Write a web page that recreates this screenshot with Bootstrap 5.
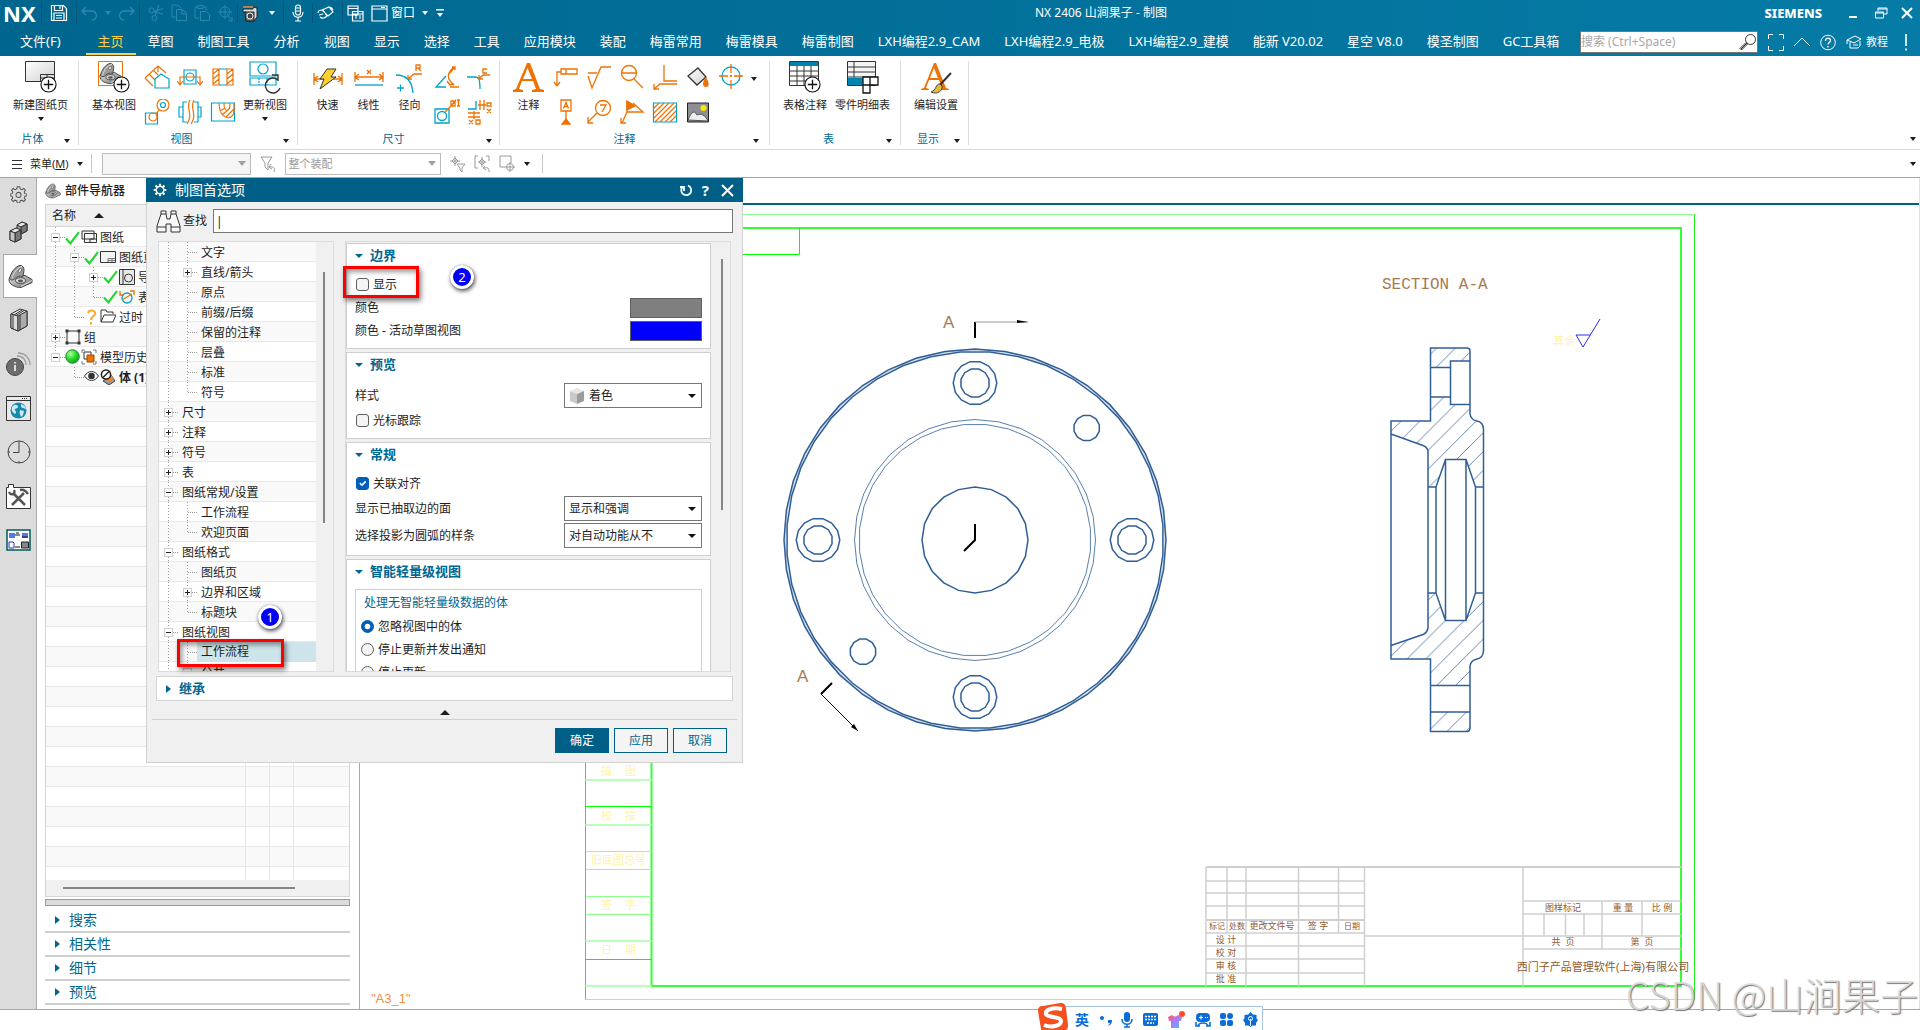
<!DOCTYPE html>
<html lang="zh-CN">
<head>
<meta charset="utf-8">
<meta name="viewport" content="width=device-width, initial-scale=1">
<title>NX 2406 - 制图</title>
<link href="https://cdn.jsdelivr.net/npm/bootstrap@5.3.0/dist/css/bootstrap.min.css" rel="stylesheet">
<style>
  :root { --nx: #005f87; --nx-text: #00678f; --line: #d4d4d4; --or: #ee7203; --cy: #00a3cc; }
  body { font-family: "Noto Sans", "Noto Sans CJK SC", sans-serif; font-size: 12px; line-height: 20px; color: #1e1e1e; background: #fff; }
  button, input, select { font: inherit; color: inherit; }
  svg { display: block; flex: none; }
  .bare { background: none; border: 0; padding: 0; }
  .tri { width: 0; height: 0; border: 3px solid transparent; border-top: 4px solid currentColor; border-bottom: 0; flex: none; display: block; }
  .tri-r { width: 0; height: 0; border: 4px solid transparent; border-left: 5px solid var(--nx-text); border-right: 0; flex: none; }
  .tri-up { width: 0; height: 0; border: 5px solid transparent; border-bottom: 5px solid #1e1e1e; border-top: 0; }

  /* title bar and tabs */
  .app-head { background: linear-gradient(90deg, #00668e, #057ba6); color: #fff; }
  .title-row { height: 28px; padding: 0 6px 2px 3px; position: relative; }
  .brand { font-size: 22px; font-weight: 700; width: 38px; }
  .siemens { font-size: 13px; font-weight: 800; margin-right: 26px; }
  .doc-title { position: absolute; left: 1035px; top: 3px; }
  .qa { height: 20px; padding: 0 4px; gap: 7px; border-left: 1px solid #02567a; color: #fff; }
  .dim { color: #2f89ad; }
  .win-txt { margin-left: -4px; }
  .tab-row { height: 28px; }
  .tab-row .nav-link { color: #fff; font-size: 13px; line-height: 20px; padding: 2px 0; border-bottom: 2px solid transparent; white-space: nowrap; }
  .tab-row .nav { gap: 24px; padding-left: 20px; }
  .tab-row .nav-link.file { margin-right: 13px; }
  .tab-row .nav-link.active { color: #ffd14a; border-color: #ffd14a; padding-left: 12px; padding-right: 12px; margin: 0 -12px; }
  .cmd-search { width: 178px; height: 22px; border: 1px solid #767676; background: #fff; }
  .cmd-search input { border: 0; outline: 0; width: 100%; padding: 0; font-size: 12px; background: none; color: #333; }
  .cmd-search input::placeholder { color: #a8a8a8; opacity: 1; }
  .head-tools { width: 154px; gap: 10px; padding-left: 2px; }
  .tutor { font-size: 11px; margin-right: 6px; }

  /* ribbon */
  .ribbon { height: 94px; border-bottom: 1px solid #d9d9d9; padding-top: 5px; }
  .rgroup { border-right: 1px solid #dcdcdc; height: 84px; padding: 0 10px 0 13px; }
  .rgroup.narrow { padding: 0 3px 0 9px; }
  .rgroup.notes { padding: 0 12px 0 8px; }
  .rbody { height: 70px; gap: 4px; }
  .big { font-size: 11px; line-height: 16px; min-width: 41px; display: flex; flex-direction: column; align-items: center; white-space: nowrap; }
  .big svg { margin-bottom: 3px; }
  .big .tri { margin-top: 4px; }
  .smalls { display: grid; grid-auto-flow: column; grid-template-rows: 35px 35px; grid-auto-columns: 33px; justify-items: center; padding-top: 3px; }
  .r2c1 { grid-area: 2 / 1; } .r2c2 { grid-area: 2 / 2; } .r2c3 { grid-area: 2 / 3; } .r2c4 { grid-area: 2 / 4; } .r2c5 { grid-area: 2 / 5; }
  .rcap { color: var(--nx-text); font-size: 11px; line-height: 16px; height: 16px; position: relative; text-align: center; padding-right: 16px; }
  .rcap .tri { position: absolute; right: -2px; top: 8px; color: #1e1e1e; }
  .narrow .rcap .tri { right: 4px; }
  .selbar { height: 28px; border-bottom: 1px solid #a5a5a5; font-size: 11px; }
  .selbar select { height: 22px; border: 1px solid #bcbcbc; color: #9a9a9a; border-radius: 0; padding: 0 3px; appearance: none; opacity: 1;
    background: #f5f5f5 url("data:image/svg+xml,%3Csvg xmlns='http://www.w3.org/2000/svg' width='8' height='5'%3E%3Cpath d='M0 0h8L4 5z' fill='%23a0a0a0'/%3E%3C/svg%3E") no-repeat right 4px center; }
  .selbar .kind { width: 149px; margin-left: 2px; }
  .selbar .scope { width: 156px; background-color: #fff; }
  .gray { color: #9a9a9a; }

  /* work area */
  .work { min-height: 0; position: relative; border-bottom: 1px solid #a8a8a8; }
  .rail { width: 37px; background: #dcdcdc; border-right: 1px solid #a9a9a9; }
  .rail button { height: 44px; width: 37px; display: grid; place-items: center; }
  .rail button:first-child { height: 32px; }
  .rail .on { background: #fff; border: 1px solid #a9a9a9; border-right: 0; margin-left: 3px; width: 34px; position: relative; }
  .navp { width: 323px; border-right: 1px solid #a9a9a9; padding: 0 9px 0 8px; }
  .navp-title { height: 26px; }
  .ntable { border: 1px solid var(--line); min-height: 0; }
  .nhead { height: 22px; background: #f0f0f0; border-bottom: 1px solid var(--line); padding-left: 6px; }
  .nrows { min-height: 0; overflow: hidden;
    background: linear-gradient(#e6e6e6, #e6e6e6) 199px 0/1px 100% no-repeat, linear-gradient(#e6e6e6, #e6e6e6) 223px 0/1px 100% no-repeat, linear-gradient(#e6e6e6, #e6e6e6) 247px 0/1px 100% no-repeat,
    repeating-linear-gradient(#fff 0 19px, #e8e8e8 19px 20px, #f9f9f9 20px 39px, #e8e8e8 39px 40px); }
  .hscroll { height: 16px; background: #f0f0f0; padding: 7px 54px 0 17px; }
  .hscroll div { height: 2px; background: #858585; }
  .splitter { height: 7px; border: 1px solid #9a9a9a; background: #dcdcdc; margin: 2px 0 3px; }
  .fold { height: 24px; border-bottom: 2px solid #cfcfcf; font-size: 14px; color: var(--nx-text); padding-left: 10px; gap: 9px; }

  /* tree rows, shared by the navigator and the dialog */
  .trow { height: 20px; display: flex; align-items: center; white-space: nowrap; line-height: 19px; }
  .gd { width: 19px; height: 20px; flex: none; position: relative; }
  .gd.v, .gd.t, .gd.l, .gd.bx { background: repeating-linear-gradient(#9a9a9a 0 1px, transparent 1px 3px) 9px 0/1px 20px no-repeat; }
  .gd.l { background-size: 1px 10px; }
  .gd.bx.last { background-size: 1px 10px; }
  .gd.t::after, .gd.l::after, .gd.bx::after { content: ""; position: absolute; left: 10px; top: 10px; width: 9px; border-top: 1px dotted #9a9a9a; }
  .gd.bx::before { content: ""; position: absolute; z-index: 1; left: 5px; top: 6px; width: 9px; height: 9px; border: 1px solid #cfcfcf;
    background: linear-gradient(#222, #222) center/5px 1px no-repeat #fff; }
  .gd.plus::before { background: linear-gradient(#222, #222) center/5px 1px no-repeat, linear-gradient(#222, #222) center/1px 5px no-repeat #fff; }
  .trow > .tx { padding-left: 3px; flex: 1; }
  .vtree .trow > .tx { padding-left: 4px; }
  .ic { display: flex; gap: 1px; }

  /* drawing sheet */
  .sheet-col { min-width: 0; }
  .sheet-tabs { height: 27px; border-bottom: 2px solid var(--nx); }
  .sheet { width: 100%; height: 100%; }
  .wm-box { z-index: 8; right: 2px; bottom: 0; }
  .wm { font-family: "Noto Sans CJK SC", sans-serif; font-size: 38px; font-weight: 300; line-height: 72px; color: rgba(222,222,222,.9); text-shadow: 1px 1px 1px #777; }

  /* preferences dialog */
  .prefs { position: absolute; left: 146px; top: 0; width: 597px; background: #f0f0f0; border: 1px solid #d0d0d0; border-top: 0; z-index: 5; }
  .prefs-head { height: 24px; background: var(--nx); color: #fff; margin: 0 -1px; padding: 0 9px 0 7px; }
  .prefs-head h1 { font-size: 14px; line-height: 24px; margin: 0; font-weight: 400; }
  .prefs-head .help { font-size: 15px; margin: 0 12px 0 9px; }
  .find-row { padding: 7px 1px 8px; gap: 2px; }
  .find { border: 1px solid #767676; border-radius: 0; height: 24px; padding: 0 2px; background: #fff; outline: 0; min-width: 0; margin-left: 4px; }
  .panes { gap: 11px; padding: 0 3px; }
  .pane { height: 431px; border: 1px solid #dcdcdc; overflow: hidden; }
  .pane.nav-pane { width: 176px; }
  .vtree { background: repeating-linear-gradient(#f9f9f9 0 19px, #e8e8e8 19px 20px, #fff 20px 39px, #e8e8e8 39px 40px); }
  .track { width: 17px; padding: 30px 0 0 7px; }
  .track.wide { width: 19px; padding: 17px 0 0 10px; }
  .track div { width: 2px; background: #858585; height: 251px; }
  .pick { background: #cde5ea; align-self: stretch; }
  .sects { padding-top: 1px; }
  .sect { background: #fff; border: 1px solid #cfcfcf; padding: 0 8px 6px; margin-bottom: 3px; }
  .sect h2, .inherit h2 { font-size: 13px; line-height: 24px; font-weight: 700; color: var(--nx-text); margin: 0; display: flex; align-items: center; gap: 7px; }
  .sect h2 { line-height: 23px; margin-bottom: 6px; }
  .sect h2 .tri { border-width: 4px 4px 0; }
  .prow { height: 23px; display: flex; align-items: center; justify-content: space-between; }
  .prow.tall { height: 27px; }
  .prefs .form-check-input { width: 13px; height: 13px; margin: 0 4px 0 1px; border: 1px solid #5f5f5f; background-color: #f4f4f4; float: none; box-shadow: none; }
  .prefs .form-check-input[type=checkbox] { border-radius: 3px; }
  .prefs .form-check-input[type=radio] { margin-left: 0; }
  .prefs .form-check-input:checked { background-color: #005fb8; border-color: #005fb8; }
  .swatch { width: 72px; height: 20px; border: 1px solid #5f5f5f; padding: 0; }
  .c-gray { background: #7f7f7f; } .c-blue { background: #00f; }
  .combo { width: 138px; height: 25px; border: 1px solid #767676; background: #fff; }
  .combo select { appearance: none; border: 0; width: 100%; height: 100%; padding: 0 4px; outline: 0;
    background: url("data:image/svg+xml,%3Csvg xmlns='http://www.w3.org/2000/svg' width='8' height='4'%3E%3Cpath d='M0 0h8L4 4z' fill='%23111'/%3E%3C/svg%3E") no-repeat right 5px center; }
  .opts { border: 1px solid #cfcfcf; padding: 0 5px 6px; }
  .opts legend { float: none; font-size: 12px; line-height: 25px; margin: 0; padding-left: 3px; color: var(--nx-text); }
  .inherit { background: #fff; border: 1px solid #d4d4d4; height: 25px; margin: 4px 1px 0; padding-left: 9px; }
  .inherit h2 { line-height: 23px; gap: 8px; }
  .more { height: 18px; padding-top: 4px; }
  .acts { border-top: 1px solid #d0d0d0; margin: 0 5px; padding: 8px 10px 9px; gap: 5px; }
  .acts .btn { width: 54px; height: 25px; padding: 0; font-size: 12px; line-height: 22px; border-radius: 0; border: 1px solid var(--nx); color: var(--nx-text); background: #f4f4f4; }
  .acts .btn.ok { background: var(--nx); color: #fff; }
  .hl { position: absolute; border: 3px solid #f00; box-shadow: 2px 3px 5px rgba(0,0,0,.5), inset 2px 3px 5px rgba(0,0,0,.4); z-index: 6; pointer-events: none; }
  .hl-a { left: 343px; top: 88px; width: 76px; height: 32px; }
  .hl-b { left: 177px; top: 461px; width: 107px; height: 28px; }
  .step { position: absolute; z-index: 6; width: 24px; height: 24px; border-radius: 50%; border: 3px solid #fff; background: #0000f5; color: #fff; text-align: center; line-height: 18px; font-size: 13px; box-shadow: 1px 2px 4px rgba(0,0,0,.7), 0 0 1px #777; }
  .step-1 { left: 258px; top: 427px; } .step-2 { left: 450px; top: 87px; }

  /* input-method bar */
  .foot { height: 20px; position: relative; }
  .ime { position: absolute; left: 1058px; bottom: 0; height: 24px; width: 205px; border: 1px solid #a9c3e6; border-bottom: 0; background: #fff; color: #0a6cd6; padding: 2px 4px 0 16px; z-index: 7; }
  .ime b { font-size: 14px; }
  .ime-logo { position: absolute; left: -22px; top: -5px; }
</style>
</head>
<body class="vh-100 d-flex flex-column overflow-hidden">

<svg width="0" height="0" class="position-absolute" aria-hidden="true">
  <defs>
    <linearGradient id="gm" x1="0" y1="0" x2="1" y2="1"><stop offset="0" stop-color="#e8e8e8"/><stop offset="1" stop-color="#6e6e6e"/></linearGradient>
    <linearGradient id="gl" x1="0" y1="0" x2="1" y2="1"><stop offset="0" stop-color="#fff"/><stop offset="1" stop-color="#d2d2d2"/></linearGradient>
    <radialGradient id="gg" cx=".35" cy=".3" r=".8"><stop offset="0" stop-color="#b6ff9e"/><stop offset=".5" stop-color="#26dd26"/><stop offset="1" stop-color="#119511"/></radialGradient>
    <linearGradient id="gs" x1="0" y1="0" x2="1" y2="1"><stop offset="0" stop-color="#ff5a5a"/><stop offset=".5" stop-color="#a97bff"/><stop offset="1" stop-color="#35c7ff"/></linearGradient>
    <symbol id="i-plus" viewBox="0 0 18 18"><circle cx="9" cy="9" r="8" fill="#fff" stroke="#111" stroke-width="1.2"/><path d="M9 4v10M4 9h10" stroke="#111" stroke-width="1.4"/></symbol>
    <symbol id="i-part" viewBox="0 0 25 24"><path d="M1 15c0-2 2-4 5-4h11l7 4v3l-11 5c-6 0-12-3-12-8z" fill="url(#gm)" stroke="#444"/><path d="M1.500 14C3 8 7 2 12 1c3 0 4 2 4 5l-1 6c-3-1-6 0-8 2s-4 2-5.500 0z" fill="#9b9b9b" stroke="#444"/><path d="M4 14C5 9 9 3 14 2" fill="none" stroke="#e2e2e2"/><ellipse cx="12" cy="6" rx="1.300" ry="2" fill="#fff" stroke="#444" stroke-width=".7" transform="rotate(20 12 6)"/><ellipse cx="12.500" cy="16" rx="5" ry="2.800" fill="#d8d8d8" stroke="#444"/><ellipse cx="12.500" cy="16.300" rx="2.600" ry="1.400" fill="#555"/><path d="M13 22l11-6" stroke="#ddd"/></symbol>
    <symbol id="i-check" viewBox="0 0 14 14"><path d="M1 8l4 4.500L13 2" fill="none" stroke="#1fd82f" stroke-width="2"/></symbol>
    <symbol id="i-sheet" viewBox="0 0 16 14"><path d="M.5 1.500h15v11h-15z" fill="#f4f4f4" stroke="#333"/><path d="M8 12v-3.500h7M12 8.500V12M8 10.500h7" fill="none" stroke="#777"/></symbol>
    <symbol id="i-gear" viewBox="0 0 20 20"><path d="M10 4.500a5.500 5.500 0 1 0 .01 0z" fill="none" stroke="currentColor" stroke-width="2.200"/><path d="M10 1v3M10 16v3M1 10h3M16 10h3M3.600 3.600l2.200 2.200M14.200 14.200l2.200 2.200M16.400 3.600l-2.200 2.200M5.800 14.200l-2.200 2.200" stroke="currentColor" stroke-width="3"/></symbol>
    <symbol id="i-gear-o" viewBox="0 0 20 20"><path d="M8.500 1h3l.5 2.500 2 .9 2.200-1.500 2 2L16.700 7l.8 2 2.500.5v2l-2.500.5-.8 2 1.500 2.200-2 2-2.200-1.500-2 .8-.5 2.500h-3L8 17.500l-2-.8-2.200 1.500-2-2L3.300 14l-.8-2L0 11.500v-2L2.500 9l.8-2-1.500-2.200 2-2L6 4.400l2-.9z" fill="none" stroke="currentColor" stroke-width="1.200"/><circle cx="10" cy="10.500" r="3" fill="none" stroke="currentColor" stroke-width="1.200"/></symbol>
    <symbol id="i-cube" viewBox="0 0 16 16"><path d="M8 0l7 3-7 3-7-3z" fill="#e6e6e6"/><path d="M1 3l7 3v10l-7-3z" fill="#c9c9c9"/><path d="M15 3l-7 3v10l7-3z" fill="#9c9c9c"/></symbol>
    <pattern id="hatch" patternUnits="userSpaceOnUse" x="3.500" y="0" width="18.750" height="18.750"><path d="M-1 19.750L19.750 -1" stroke="#5578a8" stroke-width=".9"/></pattern>
  </defs>
</svg>

<header class="app-head">
  <div class="title-row d-flex align-items-center">
    <span class="brand">NX</span>
    <div class="qa d-flex align-items-center ps-2 pe-2"><button class="bare" aria-label="保存"><svg width="18" height="18" viewBox="0 0 18 18" fill="none" stroke="#fff" stroke-width="1.200"><path d="M1.500 1.500h12l3 3v12h-15zM4.500 1.500v5h8v-5M10 2v3M4 16v-7h10v7M6 11.500h6M6 14h6"/></svg></button></div>
    <div class="qa dim d-flex align-items-center"><svg width="17" height="18" viewBox="0 0 17 18" fill="none" stroke="currentColor" stroke-width="1.300"><path d="M5 3L1 7l4 4M1 7h9c7 0 7 9 1 9"/></svg><i class="tri"></i><svg width="17" height="18" viewBox="0 0 17 18" fill="none" stroke="currentColor" stroke-width="1.300"><path d="M12 3l4 4-4 4M16 7H7c-7 0-7 9-1 9"/></svg></div>
    <div class="qa dim d-flex align-items-center ps-2">
      <svg width="16" height="18" viewBox="0 0 16 18" fill="none" stroke="currentColor"><circle cx="3.500" cy="6.500" r="2.500"/><circle cx="6.500" cy="14" r="2.500"/><path d="M6 7.500l9-3M7 11.500L11 1M6 8l9 2"/></svg>
      <svg width="16" height="18" viewBox="0 0 16 18" fill="none" stroke="currentColor"><path d="M5 13H1V1h6l3 3M5.500 5.500h6l4 4v7h-10zM11 6v4h4"/></svg>
      <svg width="16" height="18" viewBox="0 0 16 18" fill="none" stroke="currentColor"><path d="M5 14H1V3h3M9 3h3v3M4 1.500h5v3H4zM6.500 7.500h6l3 3v6h-9z"/></svg>
      <svg width="16" height="18" viewBox="0 0 16 18" fill="none" stroke="currentColor"><circle cx="8" cy="8" r="5"/><path d="M8 1v14M1 8h14M10 10l5 7M15 13v4h-4"/></svg>
    </div>
    <div class="qa d-flex align-items-center ps-1"><svg width="16" height="18" viewBox="0 0 16 18"><path d="M1 5h10V3l4 1v9l-3 4H4V8H1z" fill="#ddd" stroke="#222"/><path d="M3 8h9v9H4z" fill="#777" stroke="#222"/><circle cx="8" cy="12" r="3" fill="#444" stroke="#eee"/><path d="M1 3h10" stroke="#f28a2a" stroke-width="1.500"/></svg><i class="tri mx-1"></i></div>
    <div class="qa d-flex align-items-center px-2"><svg width="12" height="18" viewBox="0 0 12 18" fill="none" stroke="#fff" stroke-width="1.200"><rect x="3.500" y="1" width="5" height="10" rx="2.500"/><path d="M1 8c0 7 10 7 10 0M6 13v4M3 17h6M4 4h4M4 7h4"/></svg></div>
    <div class="qa d-flex align-items-center ps-1 pe-2"><svg width="17" height="14" viewBox="0 0 17 14" fill="none" stroke="#fff" stroke-width="1.100"><path d="M5 4l7-3 4 5-5 4zM6 4l4 6M1 7c0-2 2-3 4-3M2 9l4-1M3 11c2 2 5 1 7-1M12 1c2 0 3 1 4 3"/></svg></div>
    <div class="qa d-flex align-items-center"><svg width="17" height="17" viewBox="0 0 17 17" fill="#046c94" stroke="#fff" stroke-width="1.200"><path d="M1 1h10v9H1zM1 3.500h10M5.500 6.500h10.500V16H5.500zM5.500 9h10.500M8 11h2M12 11h2M8 13h2M12 13h2"/></svg><svg width="17" height="17" viewBox="0 0 17 17" fill="none" stroke="#fff" stroke-width="1.200"><path d="M1 1h15v15H1zM1 4h15M10 2.500h4"/></svg><span class="win-txt">窗口</span><i class="tri"></i></div>
    <svg class="ms-1" width="8" height="10" viewBox="0 0 8 10" fill="#fff"><path d="M0 1h8v1.500H0zM1 5h6L4 9z"/></svg>
    <span class="doc-title">NX 2406 山涧果子 - 制图</span>
    <span class="siemens ms-auto">SIEMENS</span>
    <button class="bare me-3" aria-label="最小化"><svg width="10" height="12"><path d="M1 10h8" stroke="#fff" stroke-width="2"/></svg></button>
    <button class="bare me-2" aria-label="还原"><svg width="14" height="14" viewBox="0 0 14 14" fill="none" stroke="#fff"><path d="M4 5V2h9v6h-3M1.500 6h8v6h-8zM4 3h9M1.500 7h8"/></svg></button>
    <button class="bare ms-1" aria-label="关闭"><svg width="14" height="14" viewBox="0 0 14 14"><path d="M2 2l10 10M12 2L2 12" stroke="#fff" stroke-width="2"/></svg></button>
  </div>
  <div class="tab-row d-flex align-items-center">
    <nav class="nav flex-nowrap">
      <a class="nav-link file" href="#">文件(F)</a><a class="nav-link active" href="#">主页</a><a class="nav-link" href="#">草图</a><a class="nav-link" href="#">制图工具</a><a class="nav-link" href="#">分析</a><a class="nav-link" href="#">视图</a><a class="nav-link" href="#">显示</a><a class="nav-link" href="#">选择</a><a class="nav-link" href="#">工具</a><a class="nav-link" href="#">应用模块</a><a class="nav-link" href="#">装配</a><a class="nav-link" href="#">梅雷常用</a><a class="nav-link" href="#">梅雷模具</a><a class="nav-link" href="#">梅雷制图</a><a class="nav-link" href="#">LXH编程2.9_CAM</a><a class="nav-link" href="#">LXH编程2.9_电极</a><a class="nav-link" href="#">LXH编程2.9_建模</a><a class="nav-link" href="#">能新 V20.02</a><a class="nav-link" href="#">星空 V8.0</a><a class="nav-link" href="#">模圣制图</a><a class="nav-link" href="#">GC工具箱</a>
    </nav>
    <div class="cmd-search d-flex align-items-center ms-auto me-2"><input type="search" aria-label="搜索" placeholder="搜索 (Ctrl+Space)"><svg width="18" height="18" viewBox="0 0 18 18" fill="none" stroke="#333"><circle cx="11.500" cy="6.500" r="5"/><path d="M8 10l-6 6M7 9.500l-6 6 1.500 1.500 6-6"/></svg></div>
    <div class="head-tools d-flex align-items-center">
      <svg width="16" height="17" viewBox="0 0 16 17" fill="none" stroke="#fff"><path d="M.5 5V.5H5M11 .5h4.500V5M15.500 12v4.500H11M5 16.500H.5V12"/></svg>
      <svg width="16" height="17" viewBox="0 0 16 17" fill="none" stroke="#fff"><path d="M0 12l8-8 8 8"/></svg>
      <svg width="16" height="17" viewBox="0 0 16 17" fill="none" stroke="#fff"><circle cx="8" cy="8.500" r="7.300"/><path d="M5.500 7c0-4 5-3.500 5-.5 0 2-2.500 2-2.500 4M8 12v1.500" stroke-width="1.300"/></svg>
      <span class="tutor d-flex align-items-center gap-1"><svg width="16" height="15" viewBox="0 0 16 15" fill="none" stroke="#fff"><path d="M1 5l8-4 6 3-7 4zM4 7v6h8l2-2V6M7 10h5M1 5v4"/></svg>教程</span>
      <svg width="4" height="17" viewBox="0 0 4 17"><path d="M2 0v12M2 14.500v2" stroke="#fff" stroke-width="1.600"/></svg>
    </div>
  </div>
</header>

<section class="ribbon d-flex">
  <div class="rgroup">
    <div class="rbody d-flex">
      <button class="bare big"><svg width="32" height="33" viewBox="0 0 32 33"><path d="M.5.500h29v20H.5z" fill="url(#gl)" stroke="#333"/><path d="M15.500 20.500v-7h14M22 13.500v7M15.500 17h14" fill="none" stroke="#333"/><use href="#i-plus" x="15" y="15" width="17" height="17"/></svg>新建图纸页<i class="tri"></i></button>
    </div>
    <div class="rcap">片体<i class="tri"></i></div>
  </div>
  <div class="rgroup">
    <div class="rbody d-flex">
      <button class="bare big"><svg width="32" height="33" viewBox="0 0 32 33"><path d="M.5.500h24v24H.5z" fill="#fff" stroke="#ee7203"/><use href="#i-part" x="1" y="1" width="23" height="23"/><use href="#i-plus" x="15" y="15" width="17" height="17"/></svg>基本视图</button>
      <div class="smalls">
        <svg width="26" height="26" viewBox="0 0 26 26" fill="none" stroke="#ee7203" stroke-width="1.200"><path d="M1 14L14 2l8 7M1 14l8 8M5 10l8 8M9 6l5 5M14 2v6"/><path d="M11 24v-9l6-5 8 5v9z" stroke="#00a3cc" fill="#fff"/></svg>
        <svg width="26" height="26" viewBox="0 0 26 26" fill="none" stroke="#00a3cc" stroke-width="1.200"><path d="M7 6h12v14H7z"/><circle cx="13" cy="13" r="4"/><path d="M3 20v-7h20v7M0 17l3 4 3-4M20 17l3 4 3-4" stroke="#ee7203"/></svg>
        <svg width="26" height="26" viewBox="0 0 26 26" fill="none" stroke="#ee7203" stroke-width="1.200"><path d="M3 5h6v16H3zM17 5h6v16h-6zM3 10l6-5M3 15l6-5M3 20l6-5M17 10l6-5M17 15l6-5M17 20l6-5"/><path d="M9 5h8M9 21h8" stroke="#00a3cc"/></svg>
        <svg class="r2c1" width="26" height="26" viewBox="0 0 26 26" fill="none" stroke="#ee7203" stroke-width="1.200"><path d="M1.500 14h12v11h-12z" stroke="#00a3cc"/><circle cx="9" cy="18" r="4"/><circle cx="19" cy="6" r="6"/><circle cx="19" cy="6" r="2.500" stroke="#00a3cc"/><path d="M12 15l3-4"/></svg>
        <svg class="r2c2" width="26" height="26" viewBox="0 0 26 26" fill="none" stroke="#00a3cc" stroke-width="1.200"><path d="M10 3H6v20h4M6 8H2v10h4M17 3h4v20h-4M21 8h3v10h-3"/><path d="M13 1c-5 8 4 14-3 24M17 1c-5 8 4 14-3 24" stroke="#ee7203"/></svg>
        <svg class="r2c3" width="26" height="26" viewBox="0 0 26 26" fill="none" stroke="#00a3cc" stroke-width="1.200"><path d="M1.500 4h23v18h-23z"/><path d="M9 4c0 18 15 18 15 8V4M14 4c0 10 6 10 6 0M10 12l5-3M12 16l7-6M16 18l8-8" stroke="#ee7203"/></svg>
      </div>
      <button class="bare big"><svg width="32" height="33" viewBox="0 0 32 33" fill="none" stroke="#00a3cc" stroke-width="1.200"><path d="M1 1h26v14H1zM1 17h26v7H1z"/><circle cx="14" cy="8" r="5"/><path d="M10 17v7M18 17v7" stroke-dasharray="2 1"/><path d="M29 19a7.500 7.500 0 1 0 2 8M23 14h6v6" stroke="#333" stroke-width="1.400"/></svg>更新视图<i class="tri"></i></button>
    </div>
    <div class="rcap">视图<i class="tri"></i></div>
  </div>
  <div class="rgroup narrow">
    <div class="rbody d-flex gap-0">
      <button class="bare big"><svg width="30" height="33" viewBox="0 0 30 33"><path d="M1 12v12M29 12v12M1 18h27M5 15l-4 3 4 3M25 15l4 3-4 3" stroke="#ee7203" stroke-width="1.300" fill="none"/><path d="M14 8h9l-5 8h5L7 28l4-10H7z" fill="#ffcf2e" stroke="#333"/></svg>快速</button>
      <button class="bare big"><svg width="30" height="33" viewBox="0 0 30 33" fill="none" stroke="#ee7203" stroke-width="1.300"><path d="M1 11v10M29 11v10M1 16h28M5 13l-4 3 4 3M25 13l4 3-4 3M13 9l4 4M17 9l-4 4"/><path d="M1 24h28" stroke="#00a3cc"/></svg>线性</button>
      <button class="bare big"><svg width="30" height="33" viewBox="0 0 30 33" fill="none" stroke="#ee7203" stroke-width="1.300"><path d="M21 10V4h4v3h-4M23 7l3 3M27 13h-8l-6 5M13 14v4h4"/><path d="M1 14c10 0 16 6 17 18M2 27h7M5.500 23.500v7" stroke="#00a3cc"/></svg>径向</button>
      <div class="smalls">
        <svg width="26" height="26" viewBox="0 0 26 26" fill="none" stroke="#ee7203" stroke-width="1.300"><path d="M12 12L2 23h10" stroke="#00a3cc"/><path d="M14 11l7-8M20 3c-8 7-7 12 0 18M18 3h3v3M13 17l3 4 4-1M16 23h9"/></svg>
        <svg width="26" height="26" viewBox="0 0 26 26" fill="none" stroke="#00a3cc" stroke-width="1.300"><path d="M0 13h8c4 0 5 3 5 12"/><path d="M23 11h-7l-4 4M12 11v4h4M20 5h-4v4h4" stroke="#ee7203"/></svg>
        <svg class="r2c1" width="26" height="26" viewBox="0 0 26 26" fill="none" stroke="#00a3cc" stroke-width="1.300"><path d="M1 10h14v14H1z"/><circle cx="8" cy="17" r="4.500"/><path d="M11 13l5-5M17 2h4v5h-4zM16 8l6-7M23 1h3M24.500 1v6M23 7h3" stroke="#ee7203"/></svg>
        <svg class="r2c2" width="26" height="26" viewBox="0 0 26 26" fill="none" stroke="#00a3cc" stroke-width="1.300"><path d="M1 10h8V2"/><path d="M13 1v10M17 1v10M11 6h8M20 4h4v3h-4zM20 10l4 4M24 10l-4 4M1 14h12M1 18h12M7 12v8M2 21l4 4M6 21l-4 4M9 21h4v4H9z" stroke="#ee7203"/></svg>
      </div>
    </div>
    <div class="rcap">尺寸<i class="tri"></i></div>
  </div>
  <div class="rgroup notes">
    <div class="rbody d-flex gap-0">
      <button class="bare big"><svg width="33" height="33" viewBox="0 0 33 33" fill="#ee7203"><path d="M15 2h3l10 26 4 1v2H20v-2l4-1-3-8H10l-3 8 4 1v2H1v-2l3-1zM11 18h9L15.500 7z"/></svg>注释</button>
      <div class="smalls">
        <svg width="26" height="26" viewBox="0 0 26 26" fill="none" stroke="#ee7203" stroke-width="1.300"><path d="M8 5h16v5H8zM13 5v5M8 8H4v14M1 18l3 4 3-4"/></svg>
        <svg class="r2c1" width="26" height="26" viewBox="0 0 26 26" fill="none" stroke="#ee7203" stroke-width="1.300"><path d="M8 1h10v11H8zM13 12v10M10.500 9.500l2.500-6 2.500 6M11.500 7.500h3"/><path d="M13 20l4 5H9z" fill="#ee7203"/></svg>
        <svg width="26" height="26" viewBox="0 0 26 26" fill="none" stroke="#ee7203" stroke-width="1.300"><path d="M2 9h9M2 12l4 12 9-21h10"/></svg>
        <svg class="r2c2" width="26" height="26" viewBox="0 0 26 26" fill="none" stroke="#ee7203" stroke-width="1.300"><circle cx="17" cy="9" r="7.500"/><path d="M11 14L2 23M2 18v6h5M14 6h6l-4 7"/></svg>
        <svg width="26" height="26" viewBox="0 0 26 26" fill="none" stroke="#ee7203" stroke-width="1.300"><circle cx="10" cy="9" r="7.500"/><path d="M2 9h16M15 15l9 9"/></svg>
        <svg class="r2c3" width="26" height="26" viewBox="0 0 26 26" fill="none" stroke="#ee7203" stroke-width="1.300"><path d="M8 2v11l-5 11M2 19v5h5M8 13h16L14 4"/><path d="M8 2l8 5-8 4z" fill="#ee7203"/></svg>
        <svg width="26" height="26" viewBox="0 0 26 26" fill="none" stroke="#ee7203" stroke-width="1.300"><path d="M12 1v16h13M25 20H8l-6 5M2 20v5h5"/></svg>
        <svg class="r2c4" width="26" height="26" viewBox="0 0 26 26" fill="none" stroke="#ee7203" stroke-width="1.200"><path d="M1.500 4h23v19h-23z" stroke="#00a3cc"/><path d="M2 9l5-5M2 14L12 4M2 19L17 4M3 23L22 4M8 23L24 7M13 23l11-11M18 23l6-6"/></svg>
        <svg width="26" height="26" viewBox="0 0 26 26"><path d="M13 4l8 9-9 8-9-9z" fill="url(#gl)" stroke="#333" stroke-width="1.300"/><path d="M21 13c3 5 4 10 0 10s-4-5 0-10z" fill="#ee7203"/></svg>
        <svg class="r2c5" width="26" height="26" viewBox="0 0 26 26"><path d="M2.500 4h21v19h-21z" fill="#8b8f94" stroke="#222"/><circle cx="18.500" cy="9" r="3" fill="#ffe600"/><path d="M3 21c4-10 7-9 9-5 4-2 8 0 11 6z" fill="#e9eef3" stroke="#555"/></svg>
        <svg width="26" height="26" viewBox="0 0 26 26" fill="none" stroke="#00a3cc" stroke-width="1.300"><circle cx="13" cy="12" r="9"/><path d="M13 0v9M13 16v9M1 12h9M16 12h9M13 11v2M12 12h2" stroke="#ee7203"/></svg>
      </div>
      <i class="tri align-self-start mt-3 ms-1"></i>
    </div>
    <div class="rcap">注释<i class="tri"></i></div>
  </div>
  <div class="rgroup">
    <div class="rbody d-flex gap-2">
      <button class="bare big"><svg width="32" height="33" viewBox="0 0 32 33"><path d="M.5.500h29v24H.5zM.5 10h29M.5 15h29M.5 20h29M8 5v20M15 5v20M22 5v20" fill="#fff" stroke="#333"/><path d="M1 1h28v4H1z" fill="#0084ad"/><use href="#i-plus" x="15" y="15" width="17" height="17"/></svg>表格注释</button>
      <button class="bare big"><svg width="32" height="33" viewBox="0 0 32 33"><path d="M.5.500h28v24H.5zM.5 6h28M.5 11h28M.5 16h28M7 .5v16" fill="#f4f4f4" stroke="#333"/><path d="M1 17h18v7H1z" fill="#0084ad"/><path d="M16 16h15v8h-8v8h-7zM23 16v8h-7" fill="#fff" stroke="#111" stroke-width="1.300"/></svg>零件明细表</button>
    </div>
    <div class="rcap">表<i class="tri"></i></div>
  </div>
  <div class="rgroup">
    <div class="rbody d-flex">
      <button class="bare big"><svg width="33" height="33" viewBox="0 0 33 33"><path d="M14 2h2l10 25 3 1v1H19v-1l3-1-3-8H9l-3 8 3 1v1H1v-1l3-1zM10 17h8L14 7z" fill="#ee7203"/><path d="M31 12L18 26" stroke="#333" stroke-width="2"/><path d="M20 23c-5 0-3 6-9 8 6 3 12-1 11-6z" fill="#e3bb3e" stroke="#444"/></svg>编辑设置</button>
    </div>
    <div class="rcap">显示<i class="tri"></i></div>
  </div>
  <i class="tri ms-auto align-self-end me-1 mb-2"></i>
</section>

<section class="selbar d-flex align-items-center">
  <button class="bare d-flex align-items-center gap-2 ps-2 ms-1"><svg width="10" height="10"><path d="M0 1.500h10M0 5.500h10M0 9.500h10" stroke="#333"/></svg><span>菜单(<u>M</u>)</span><i class="tri"></i></button>
  <div class="vr mx-2 my-1 opacity-25"></div>
  <select class="kind" disabled aria-label="类型过滤器"><option></option></select>
  <svg class="mx-2 gray" width="18" height="18" viewBox="0 0 18 18" fill="none" stroke="currentColor"><path d="M2 2h11L9 8v7l-3-3V8zM12 9l-2 3 3 2M10 12c6-1 6 2 5 5"/></svg>
  <select class="scope" disabled aria-label="选择范围"><option>整个装配</option></select>
  <div class="d-flex align-items-center gray gap-2 ms-2">
    <svg width="17" height="18" viewBox="0 0 17 18" fill="none" stroke="currentColor"><path d="M6 1v10M1 6h10M6 3l3 3-3 3-3-3zM8 9h8l-3 4v4l-2-2v-2z"/></svg>
    <svg width="17" height="18" viewBox="0 0 17 18" fill="none" stroke="currentColor"><path d="M4 1H1v12h3M12 1h3v5M8 2v10M4 7h8M8 4l3 3-3 3-3-3zM11 11l-2 2 3 2M10 13c5-1 5 1 5 4"/></svg>
    <svg width="17" height="18" viewBox="0 0 17 18" fill="none" stroke="currentColor"><path d="M1 1h11v7M6 12H1V1"/><circle cx="11" cy="12" r="3.500"/><path d="M11 7v10M6 12h10"/></svg>
  </div>
  <i class="tri ms-2 me-2"></i><div class="vr my-1 ms-1 opacity-25"></div>
  <i class="tri ms-auto me-1"></i>
</section>

<main class="work flex-fill d-flex">
  <aside class="rail">
    <button class="bare" aria-label="设置"><svg width="17" height="17" style="color:#555"><use href="#i-gear-o"/></svg></button>
    <button class="bare" aria-label="装配导航器"><svg width="20" height="24" viewBox="0 0 20 24" stroke="#333"><path d="M1 11v9l5 2 6-3v-5l6-3V4l-5-2-5 3v3z" fill="#9a9a9a"/><path d="M1 11l6-3 5 2-6 3zM8 5l5-3 5 2-6 3z" fill="#e8e8e8"/><path d="M6 13v9l6-3v-9zM12 7v7l6-3V4z" fill="#777"/><path d="M1 11l5 2v9l-5-2z" fill="#c4c4c4"/></svg></button>
    <button class="bare on" aria-label="部件导航器"><svg width="25" height="25"><use href="#i-part"/></svg></button>
    <button class="bare" aria-label="重用库"><svg width="20" height="24" viewBox="0 0 20 24" fill="#e9e9e9" stroke="#333"><path d="M2 6l9-5 7 2v15l-9 5-7-3z"/><path d="M2 6l7 2v15l-7-3z" fill="#ddd"/><path d="M9 8l9-5v15l-9 5z" fill="#aaa"/><path d="M5 7l8-5M7 7.500l8-5M4 7v14M11 7v15" fill="none"/></svg></button>
    <button class="bare" aria-label="信息"><svg width="25" height="25" viewBox="0 0 25 25"><circle cx="9" cy="15" r="8.500" fill="#6d6d6d" stroke="#444"/><path d="M9 10v1.500M9 13v6" stroke="#fff" stroke-width="1.500"/><path d="M11 4c6 0 9 4 9 9M12 1c7 0 12 5 12 12" fill="none" stroke="#999" stroke-width="1.300"/></svg></button>
    <button class="bare" aria-label="浏览器"><svg width="25" height="25" viewBox="0 0 25 25"><path d="M.5.500h24v24H.5z" fill="#e9e9e9" stroke="#333"/><path d="M.5 4.500h24" stroke="#333"/><path d="M16 2.500h6" stroke="#333" stroke-dasharray="1 1"/><circle cx="12.500" cy="14.500" r="8" fill="#168aad"/><path d="M6 11c3-4 6-2 6 0s-4 1-3 3 2 3 0 4c-3-2-4-4-3-7zM15 8c3 1 5 3 5 5l-3-1-2-1zM14 14l4 1-1 4-2 2c-1-3-2-4-1-7z" fill="#cfeaf2"/></svg></button>
    <button class="bare" aria-label="历史记录"><svg width="24" height="24" viewBox="0 0 24 24" fill="none" stroke="#444"><circle cx="12" cy="12" r="11"/><path d="M12 3v9.500H6M12 1v2M12 21v2M1 12h2M21 12h2" /></svg></button>
    <button class="bare" aria-label="加工向导"><svg width="25" height="25" viewBox="0 0 25 25"><path d="M.5 3.500h2v-3h5v3h17v21H.5z" fill="#fff" stroke="#333"/><path d="M7 9l12 12M18 9L6 21M3 8c2 4 7 2 5-2M14 6c3-1 6 1 8 4" stroke="#555" stroke-width="2.500" fill="none"/></svg></button>
    <button class="bare" aria-label="流程"><svg width="25" height="22" viewBox="0 0 25 22"><path d="M1 1h23v20H1z" fill="#fff" stroke="#005a5a" stroke-width="1.500"/><path d="M3 4h6v5H3zM16 4h6v5h-6z" fill="#5577ee"/><path d="M3 13h4l1 1v5H3z" fill="#fff" stroke="#2233cc"/><path d="M15.500 13h7v6h-7z" fill="#888" stroke="#222"/><path d="M9 6h5M16 8h6M9 18h5M10 4h3" stroke="#111"/></svg></button>
  </aside>

  <section class="navp d-flex flex-column">
    <div class="navp-title d-flex align-items-center gap-1"><svg width="16" height="16"><use href="#i-part"/></svg><span class="fw-medium">部件导航器</span></div>
    <div class="ntable flex-fill d-flex flex-column">
      <div class="nhead d-flex align-items-center">名称<i class="tri-up" style="margin-left:18px"></i></div>
      <div class="nrows flex-fill">
        <div class="trow"><i class="gd bx"></i><span class="ic"><svg width="15" height="15"><use href="#i-check"/></svg><svg width="16" height="14" viewBox="0 0 16 14" fill="#f4f4f4" stroke="#333"><path d="M1 1h12v8H1zM3.500 3.500h12v9h-12zM9 12v-3h6"/></svg></span><span class="tx">图纸</span></div>
        <div class="trow"><i class="gd v"></i><i class="gd bx"></i><span class="ic"><svg width="15" height="15"><use href="#i-check"/></svg><svg width="16" height="14"><use href="#i-sheet"/></svg></span><span class="tx">图纸页</span></div>
        <div class="trow"><i class="gd v"></i><i class="gd v"></i><i class="gd bx plus"></i><span class="ic"><svg width="15" height="15"><use href="#i-check"/></svg><svg width="16" height="16" viewBox="0 0 16 16" fill="#e8e8e8" stroke="#333"><path d="M.5.500h15v15H.5zM4 1v14"/><circle cx="9.500" cy="9" r="4"/></svg></span><span class="tx">导入的</span></div>
        <div class="trow"><i class="gd v"></i><i class="gd v"></i><i class="gd l"></i><span class="ic"><svg width="15" height="15"><use href="#i-check"/></svg><svg width="16" height="16" viewBox="0 0 16 16" fill="none" stroke="#00a3cc" stroke-width="1.300"><circle cx="8" cy="9" r="5"/><path d="M3 11l10-6M1 2v4h4M11 2h4v4" stroke="#ee7203"/></svg></span><span class="tx">表面</span></div>
        <div class="trow"><i class="gd v"></i><i class="gd l"></i><span class="ic"><svg width="15" height="16" viewBox="0 0 15 16" fill="none" stroke="#ffa62b" stroke-width="2"><path d="M4 4c1-4 8-3 7 1-1 3-4 2-4 6M7 13v2.500"/></svg><svg width="16" height="14" viewBox="0 0 16 14" fill="none" stroke="#333"><path d="M1 13V1h5l1 2h6v2M1 13l3-7h12l-3 7z"/></svg></span><span class="tx">过时</span></div>
        <div class="trow"><i class="gd bx plus"></i><span class="ic"><svg width="16" height="16" viewBox="0 0 16 16" fill="none" stroke="#333"><path d="M2 2h12v12H2z"/><path d="M.5.500h3v3h-3zM12.500.500h3v3h-3zM.5 12.500h3v3h-3zM12.500 12.500h3v3h-3z" fill="#333" stroke="none"/></svg></span><span class="tx">组</span></div>
        <div class="trow"><i class="gd bx last"></i><span class="ic"><svg width="15" height="15" viewBox="0 0 15 15"><circle cx="7.500" cy="7.500" r="6.800" fill="url(#gg)" stroke="#285"/></svg><svg width="16" height="16" viewBox="0 0 16 16" fill="none" stroke="#777"><path d="M1 4V1h3M12 1h3v3M15 12v3h-3M4 15H1v-3"/><path d="M3 3h7v7H3z" stroke="#333" fill="#fff"/><path d="M6 6h7v7H6z" fill="#ee7203" stroke="#a04800"/></svg></span><span class="tx">模型历史记录</span></div>
        <div class="trow fw-bold"><i class="gd"></i><i class="gd l"></i><span class="ic"><svg width="15" height="14" viewBox="0 0 15 14"><path d="M.5 7c4-6 10-6 14 0-4 6-10 6-14 0z" fill="#fff" stroke="#333"/><circle cx="7.500" cy="7" r="3.300" fill="#333"/></svg><svg width="16" height="16" viewBox="0 0 16 16"><path d="M3 12l8-6 4 6-6 4z" fill="#999" stroke="#444"/><path d="M5 10l6-4 3 4-5 3z" fill="#f0862c"/><circle cx="6" cy="5.500" r="4.600" fill="#fff" stroke="#222" stroke-width="1.500"/><path d="M3 8.500l6-6" stroke="#222" stroke-width="1.500"/></svg></span><span class="tx">体 (1)</span></div>
      </div>
      <div class="hscroll"><div></div></div>
    </div>
    <div class="splitter"></div>
    <div class="fold d-flex align-items-center"><i class="tri-r"></i>搜索</div>
    <div class="fold d-flex align-items-center"><i class="tri-r"></i>相关性</div>
    <div class="fold d-flex align-items-center"><i class="tri-r"></i>细节</div>
    <div class="fold d-flex align-items-center mb-1"><i class="tri-r"></i>预览</div>
  </section>

  <section class="sheet-col flex-fill d-flex flex-column border-end">
    <div class="sheet-tabs"></div>
    <div class="flex-fill" style="min-height:0">
    <svg class="sheet" viewBox="360 205 1559 804" preserveAspectRatio="xMinYMin meet" font-family="Liberation Sans, Noto Sans CJK SC, sans-serif">
      <g fill="none" stroke="#33ff33">
        <path d="M585.500 214.500H1694.500" stroke="#8dff8d"/><path d="M585.500 999.500H1694.500" stroke="#8dff8d"/>
        <path d="M585.500 214.500V999.500M1694.500 214.500V999.500" stroke="#22ee22"/>
        <path d="M651.500 228H1681V986H651.500z" stroke-width="2"/>
        <path d="M651 254.500H799.500V228M585.500 806.500h66M585.500 959.500h66" stroke="#0f0"/>
        <path d="M585.500 851.500h66M585.500 869.500h66M585.500 896.500h66M585.500 914.500h66" stroke="#8dff8d"/>
        <path d="M585.500 780h66M585.500 825h66M585.500 941h66M585.500 986h66" stroke="#b9ffb9" stroke-width="2"/>
      </g>
      <g fill="#fff2a8" font-size="11"><text x="601" y="775">描</text><text x="625" y="775">图</text><text x="601" y="820">校</text><text x="625" y="820">描</text><text x="591" y="864">旧底图总号</text><text x="601" y="909">签</text><text x="625" y="909">字</text><text x="601" y="954">日</text><text x="625" y="954">期</text><text x="1553" y="345">其余</text></g>
      <path d="M1576 335h14M1576 335l7 12 17-28" fill="none" stroke="#2a2af0"/>
      <text x="371" y="1003" font-size="13" fill="#f58f45">"A3_1"</text>

      <g fill="none" stroke="#2f5f98" stroke-width="1.500">
        <circle cx="975" cy="540" r="190" stroke="#d5dbe4" stroke-width="2"/>
        <g id="rings"></g>
      </g>
      <g fill="none" stroke="#000"><path d="M975 322v16M975 524v16l-11 11M821 694l11-11" stroke-width="2"/><path d="M975 322h53" stroke="#999"/><path d="M821 694l37 37"/></g>
      <path d="M1028 322l-11-2v3zM858 731l-7-4 3-3z" fill="#000"/>
      <g fill="#a87a52"><text x="943" y="328" font-size="17">A</text><text x="797" y="682" font-size="17">A</text><text x="1382" y="289" font-size="16" font-family="Liberation Mono, monospace">SECTION A-A</text></g>

      <path fill="url(#hatch)" d="M1430.500 348H1470V361H1450V367.500H1430.500zM1430.500 397H1450V404.500H1470V414Q1471 420 1477 421 1483 422 1483.500 429V487H1475.500L1466 459.500H1445.500L1436 487H1428V451Q1427 447 1423 445.500L1391 434V421H1430.500zM1428 593H1436L1445.500 620.500H1466L1475.500 593H1483.500V651Q1483 658 1477 659 1471 660 1470 666V685.500H1430.500V659H1391V645.500L1423 634.500Q1427 633 1428 628zM1430.500 712H1470V731.500H1430.500z"/>
      <g fill="none" stroke="#2f5f98" stroke-width="1.500">
        <path d="M1430.500 348H1467Q1470 348 1470 351V414Q1471 420 1477 421 1483 422 1483.500 429V651Q1483 658 1477 659 1471 660 1470 666V728Q1470 731.500 1467 731.500H1430.500V659H1391V421H1430.500z"/>
        <path d="M1430.500 367.500H1450M1430.500 397H1450M1470 361H1450.500V404.500H1470M1391 434L1423 445.500Q1427 447 1428 451V628Q1427 633 1423 634.500L1391 645.500"/>
        <path d="M1428 487h8l9.500-27.500H1466l9.500 27.500h8M1428 593h8l9.500 27.500H1466l9.500-27.500h8M1436 487v106M1445.500 459.500v161M1466 459.500v161M1475.500 487v106M1430.500 685.500h39.500M1430.500 712h39.500"/>
      </g>

      <g fill="none" stroke="#cfcfcf" stroke-width="1.500">
        <path d="M1206 867H1681M1206 920h158.500" stroke-width="2"/>
        <path d="M1206 867V986M1206 881h158.500M1206 893h158.500M1206 906h158.500M1206 933h158.500M1206 946h158.500M1206 959h158.500M1206 973h158.500M1227 867v66M1246 867v119M1298.500 867v119M1338.500 867v66M1364.500 867v119M1523 867v119M1364.500 936H1681M1523 901h158M1523 914h158M1523 949h158M1544 914v22M1565.500 914v22M1584 914v22M1602 901v48M1642 901v35"/>
      </g>
      <g fill="#8f5a2e" font-size="9" text-anchor="middle">
        <text x="1563" y="911">图样标记</text><text x="1623" y="911">重 量</text><text x="1662" y="911">比 例</text>
        <text x="1217" y="929" font-size="8">标记</text><text x="1237" y="929" font-size="8">处数</text><text x="1272" y="929">更改文件号</text><text x="1318" y="929">签 字</text><text x="1352" y="929" font-size="8">日期</text>
        <text x="1226" y="943">设 计</text><text x="1226" y="956">校 对</text><text x="1226" y="969">审 核</text><text x="1226" y="982">批 准</text>
        <text x="1563" y="945">共&#160; 页</text><text x="1642" y="945">第&#160; 页</text>
        <text x="1603" y="971" font-size="11">西门子产品管理软件(上海)有限公司</text>
      </g>
    </svg>
    </div>
  </section>

  <div class="prefs" role="dialog" aria-label="制图首选项">
    <div class="prefs-head d-flex align-items-center">
      <svg class="me-2" width="14" height="14"><use href="#i-gear"/></svg><h1 class="flex-fill">制图首选项</h1>
      <button class="bare" aria-label="重置"><svg width="14" height="14" viewBox="0 0 14 14" fill="none" stroke="#fff" stroke-width="1.800"><path d="M9 2.500a5 5 0 1 1-6 2M1 4h4v4"/></svg></button>
      <button class="bare help fw-bold" aria-label="帮助">?</button>
      <button class="bare" aria-label="关闭"><svg width="13" height="13" viewBox="0 0 13 13"><path d="M1 1l11 11M12 1L1 12" stroke="#fff" stroke-width="2"/></svg></button>
    </div>
    <div class="px-2">
      <div class="find-row d-flex align-items-center">
        <svg width="25" height="23" viewBox="0 0 25 23" fill="#f8f8f8" stroke="#333"><path d="M1 22v-6L5 4V1h5v3l1 5h3l1-5V1h5v3l4 12v6h-9v-8h-5v8zM1 17h9M15 17h9M5 4h5M15 4h5"/></svg>
        <label for="find">查找</label><input id="find" class="find flex-fill" type="text" value="|">
      </div>
      <div class="panes d-flex">
        <div class="pane nav-pane d-flex">
          <div class="vtree flex-fill">
            <div class="trow"><i class="gd v"></i><i class="gd t"></i><span class="tx">文字</span></div>
            <div class="trow"><i class="gd v"></i><i class="gd bx plus"></i><span class="tx">直线/箭头</span></div>
            <div class="trow"><i class="gd v"></i><i class="gd t"></i><span class="tx">原点</span></div>
            <div class="trow"><i class="gd v"></i><i class="gd t"></i><span class="tx">前缀/后缀</span></div>
            <div class="trow"><i class="gd v"></i><i class="gd t"></i><span class="tx">保留的注释</span></div>
            <div class="trow"><i class="gd v"></i><i class="gd t"></i><span class="tx">层叠</span></div>
            <div class="trow"><i class="gd v"></i><i class="gd t"></i><span class="tx">标准</span></div>
            <div class="trow"><i class="gd v"></i><i class="gd l"></i><span class="tx">符号</span></div>
            <div class="trow"><i class="gd bx plus"></i><span class="tx">尺寸</span></div>
            <div class="trow"><i class="gd bx plus"></i><span class="tx">注释</span></div>
            <div class="trow"><i class="gd bx plus"></i><span class="tx">符号</span></div>
            <div class="trow"><i class="gd bx plus"></i><span class="tx">表</span></div>
            <div class="trow"><i class="gd bx"></i><span class="tx">图纸常规/设置</span></div>
            <div class="trow"><i class="gd v"></i><i class="gd t"></i><span class="tx">工作流程</span></div>
            <div class="trow"><i class="gd v"></i><i class="gd l"></i><span class="tx">欢迎页面</span></div>
            <div class="trow"><i class="gd bx"></i><span class="tx">图纸格式</span></div>
            <div class="trow"><i class="gd v"></i><i class="gd t"></i><span class="tx">图纸页</span></div>
            <div class="trow"><i class="gd v"></i><i class="gd bx plus"></i><span class="tx">边界和区域</span></div>
            <div class="trow"><i class="gd v"></i><i class="gd l"></i><span class="tx">标题块</span></div>
            <div class="trow"><i class="gd bx"></i><span class="tx">图纸视图</span></div>
            <div class="trow"><i class="gd v"></i><i class="gd t"></i><span class="tx pick">工作流程</span></div>
            <div class="trow"><i class="gd v"></i><i class="gd bx"></i><span class="tx">公共</span></div>
          </div>
          <div class="track"><div></div></div>
        </div>
        <div class="pane d-flex flex-fill">
          <div class="sects flex-fill">
            <div class="sect">
              <h2><i class="tri"></i>边界</h2>
              <div class="prow"><span class="d-flex align-items-center"><input class="form-check-input" type="checkbox" id="c1"><label for="c1">显示</label></span></div>
              <div class="prow"><span>颜色</span><button class="swatch c-gray" aria-label="颜色"></button></div>
              <div class="prow"><span>颜色 - 活动草图视图</span><button class="swatch c-blue" aria-label="活动草图视图颜色"></button></div>
            </div>
            <div class="sect">
              <h2><i class="tri"></i>预览</h2>
              <div class="prow tall"><label for="s1">样式</label><span class="combo d-flex align-items-center ps-1"><svg width="16" height="16"><use href="#i-cube"/></svg><select id="s1"><option>着色</option></select></span></div>
              <div class="prow"><span class="d-flex align-items-center"><input class="form-check-input" type="checkbox" id="c2"><label for="c2">光标跟踪</label></span></div>
            </div>
            <div class="sect">
              <h2><i class="tri"></i>常规</h2>
              <div class="prow"><span class="d-flex align-items-center"><input class="form-check-input" type="checkbox" id="c3" checked><label for="c3">关联对齐</label></span></div>
              <div class="prow tall"><label for="s2">显示已抽取边的面</label><span class="combo"><select id="s2"><option>显示和强调</option></select></span></div>
              <div class="prow tall"><label for="s3">选择投影为圆弧的样条</label><span class="combo"><select id="s3"><option>对自动功能从不</option></select></span></div>
            </div>
            <div class="sect">
              <h2><i class="tri"></i>智能轻量级视图</h2>
              <div class="opts" role="radiogroup" aria-labelledby="rl">
                <legend id="rl">处理无智能轻量级数据的体</legend>
                <div class="prow"><span class="d-flex align-items-center"><input class="form-check-input" type="radio" name="lw" id="r1" checked><label for="r1">忽略视图中的体</label></span></div>
                <div class="prow"><span class="d-flex align-items-center"><input class="form-check-input" type="radio" name="lw" id="r2"><label for="r2">停止更新并发出通知</label></span></div>
                <div class="prow"><span class="d-flex align-items-center"><input class="form-check-input" type="radio" name="lw" id="r3"><label for="r3">停止更新</label></span></div>
              </div>
            </div>
          </div>
          <div class="track wide"><div></div></div>
        </div>
      </div>
      <div class="inherit"><h2><i class="tri-r"></i>继承</h2></div>
    </div>
    <div class="more d-flex justify-content-center align-items-center"><i class="tri-up"></i></div>
    <div class="acts d-flex justify-content-end">
      <button class="btn ok">确定</button><button class="btn">应用</button><button class="btn">取消</button>
    </div>
  </div>
  <div class="hl hl-a"></div><div class="hl hl-b"></div>
  <div class="step step-1">1</div><div class="step step-2">2</div>
</main>

<footer class="foot">
  <div class="ime d-flex align-items-center justify-content-between">
    <svg class="ime-logo" width="32" height="32" viewBox="0 0 32 32"><path d="M6 4l17-3c4 0 5 1 6 5l2 17c0 4-1 5-4 6l-17 3c-4 0-5-1-6-5L1 9c0-3 1-5 5-5z" fill="#f4511e"/><path d="M25 7C15 5 8 8 9 12s15 2 15 7-10 7-17 4" fill="none" stroke="#fff" stroke-width="4"/></svg>
    <b>英</b>
    <svg width="13" height="12" viewBox="0 0 13 12" fill="currentColor"><circle cx="3" cy="4" r="2"/><path d="M9 6h4c0 3-1 5-4 6 1-2 2-2 2-3H9z"/></svg>
    <svg width="12" height="16" viewBox="0 0 12 16"><rect x="3" y="0" width="6" height="10" rx="3" fill="currentColor"/><path d="M1 7c0 7 10 7 10 0M6 12v3M3 15h6" fill="none" stroke="currentColor" stroke-width="1.500"/></svg>
    <svg width="15" height="13" viewBox="0 0 15 13"><rect width="15" height="13" rx="2" fill="currentColor"/><path d="M2 3.500h11M2 6.500h11M4 10h7" stroke="#fff" stroke-width="1.500" stroke-dasharray="2 1"/></svg>
    <svg width="18" height="18" viewBox="0 0 18 18"><path d="M1 6l4-2c2 2 4 2 6 0l4 2-1 4h-2v7H4v-7H2z" fill="url(#gs)"/><circle cx="15" cy="3" r="3" fill="#ff4b2b"/></svg>
    <svg width="16" height="14" viewBox="0 0 16 14"><rect x="1" width="14" height="9" rx="4" fill="currentColor"/><path d="M4 4.500h4M6 2.500v4M10 4.500h1M12 4.500h1" stroke="#fff"/><path d="M1 9v4h4M15 9v4h-4M3 13c1-4 9-4 10 0" fill="none" stroke="currentColor" stroke-width="1.600"/></svg>
    <svg width="13" height="13" viewBox="0 0 13 13" fill="currentColor"><rect width="6" height="6" rx="2"/><rect x="7" width="6" height="6" rx="3"/><rect y="7" width="6" height="6" rx="2"/><rect x="7" y="7" width="6" height="6" rx="2"/></svg>
    <svg width="15" height="15" viewBox="0 0 15 15"><path d="M7.500 0l2.300 2.500 3.700.500v3.500L15 8l-2 3v2.500H9.500L7.500 15l-2-1.500H2V11L0 8l1.500-1.500V3l3.700-.5z" fill="currentColor"/><circle cx="7.500" cy="6.500" r="2" fill="none" stroke="#fff"/><path d="M7.500 7v7" stroke="#fff"/></svg>
  </div>
  <div class="wm-box position-absolute"><span class="wm d-block">CSDN @山涧果子</span></div>
</footer>

<script src="https://cdn.jsdelivr.net/npm/bootstrap@5.3.0/dist/js/bootstrap.bundle.min.js"></script>
<script>
  // Circles of the front view, drawn as faceted polygons: [cx, cy, r, sides, flat top, width]
  const rings = [
    [975, 540, 191, 40, 0, 1.5], [975, 540, 188.5, 40, 1, 1.5], [975, 540, 120.5, 32, 0, .8], [975, 540, 116, 32, 1, .8], [975, 540, 53, 20, 0, 1.5],
    [1086.7, 428, 13, 12, 1, 1.5], [863, 651.7, 13, 12, 1, 1.5]
  ];
  [[975, 383], [975, 697], [818, 540], [1132, 540]].forEach(([x, y]) => rings.push([x, y, 21.8, 14, 1, 1.5], [x, y, 14.5, 12, 1, 1.5]));
  document.getElementById('rings').innerHTML = rings.map(([cx, cy, r, n, flat, w]) => {
    const pts = Array.from({ length: n }, (_, i) => {
      const a = (i + flat / 2) * 2 * Math.PI / n;
      return (cx + r * Math.sin(a)).toFixed(1) + ',' + (cy - r * Math.cos(a)).toFixed(1);
    });
    return `<polygon points="${pts.join(' ')}" stroke-width="${w}"/>`;
  }).join('');
</script>
</body>
</html>
